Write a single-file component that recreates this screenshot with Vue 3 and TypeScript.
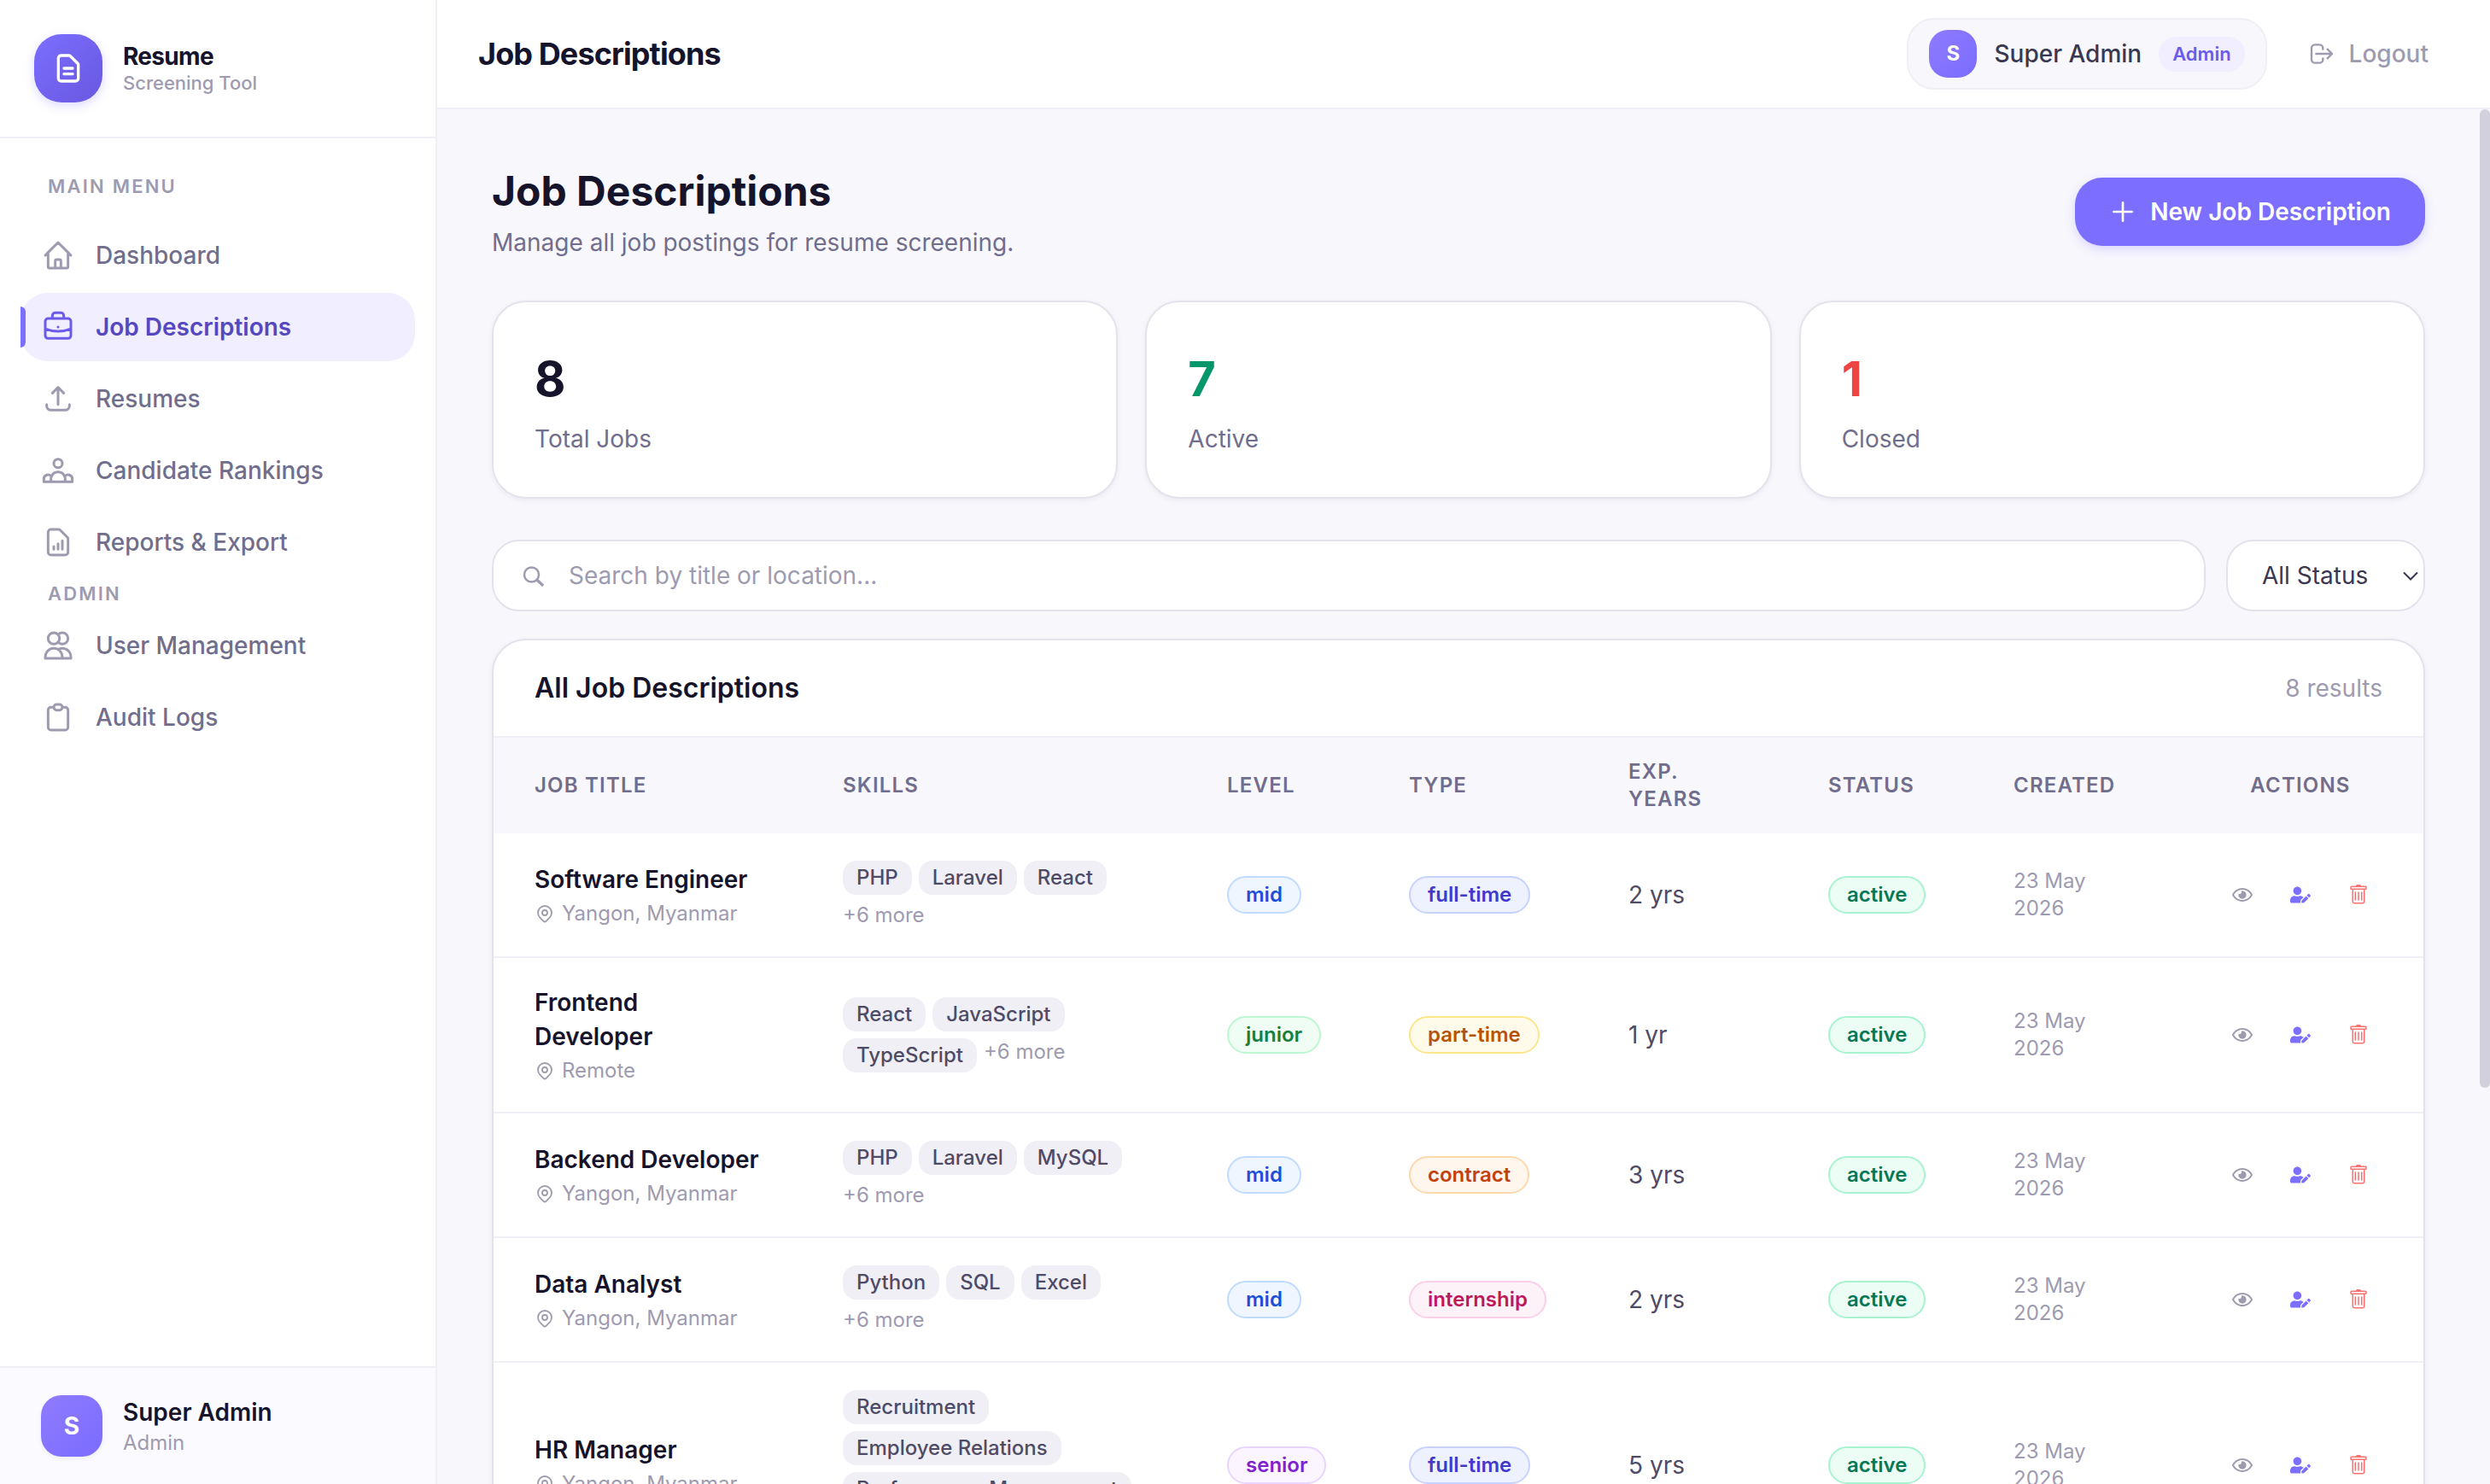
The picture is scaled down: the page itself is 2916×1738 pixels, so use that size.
<script setup lang="ts">
interface NavItem {
  label: string
  path: string
  active?: boolean
}

interface Job {
  title: string
  location: string
  skills: string[]
  more: string
  level: string
  type: string
  exp: string
  status: string
  created: string
}

const mainMenu: NavItem[] = [
  {
    label: 'Dashboard',
    path: 'M3 12l2-2m0 0l7-7 7 7M5 10v10a1 1 0 001 1h3m10-11l2 2m-2-2v10a1 1 0 01-1 1h-3m-6 0a1 1 0 001-1v-4a1 1 0 011-1h2a1 1 0 011 1v4a1 1 0 001 1m-6 0h6',
  },
  {
    label: 'Job Descriptions',
    active: true,
    path: 'M21 13.255A23.931 23.931 0 0112 15c-3.183 0-6.22-.62-9-1.745M16 6V4a2 2 0 00-2-2h-4a2 2 0 00-2 2v2m4 6h.01M5 20h14a2 2 0 002-2V8a2 2 0 00-2-2H5a2 2 0 00-2 2v10a2 2 0 002 2z',
  },
  {
    label: 'Resumes',
    path: 'M4 16v1a3 3 0 003 3h10a3 3 0 003-3v-1m-4-8l-4-4m0 0L8 8m4-4v12',
  },
  {
    label: 'Candidate Rankings',
    path: 'M17 20h5v-2a3 3 0 00-5.356-1.857M17 20H7m10 0v-2c0-.656-.126-1.283-.356-1.857M7 20H2v-2a3 3 0 015.356-1.857M7 20v-2c0-.656.126-1.283.356-1.857m0 0a5.002 5.002 0 019.288 0M15 7a3 3 0 11-6 0 3 3 0 016 0z',
  },
  {
    label: 'Reports & Export',
    path: 'M9 17v-2m3 2v-4m3 4v-6m2 10H7a2 2 0 01-2-2V5a2 2 0 012-2h5.586a1 1 0 01.707.293l5.414 5.414a1 1 0 01.293.707V19a2 2 0 01-2 2z',
  },
]

const adminMenu: NavItem[] = [
  {
    label: 'User Management',
    path: 'M12 4.354a4 4 0 110 5.292M15 21H3v-1a6 6 0 0112 0v1zm0 0h6v-1a6 6 0 00-9-5.197M13 7a4 4 0 11-8 0 4 4 0 018 0z',
  },
  {
    label: 'Audit Logs',
    path: 'M9 5H7a2 2 0 00-2 2v12a2 2 0 002 2h10a2 2 0 002-2V7a2 2 0 00-2-2h-2M9 5a2 2 0 002 2h2a2 2 0 002-2M9 5a2 2 0 012-2h2a2 2 0 012 2',
  },
]

const stats = [
  { value: 8, label: 'Total Jobs', tone: 'dark' },
  { value: 7, label: 'Active', tone: 'green' },
  { value: 1, label: 'Closed', tone: 'red' },
]

const jobs: Job[] = [
  { title: 'Software Engineer', location: 'Yangon, Myanmar', skills: ['PHP', 'Laravel', 'React'], more: '+6 more', level: 'mid', type: 'full-time', exp: '2 yrs', status: 'active', created: '23 May 2026' },
  { title: 'Frontend Developer', location: 'Remote', skills: ['React', 'JavaScript', 'TypeScript'], more: '+6 more', level: 'junior', type: 'part-time', exp: '1 yr', status: 'active', created: '23 May 2026' },
  { title: 'Backend Developer', location: 'Yangon, Myanmar', skills: ['PHP', 'Laravel', 'MySQL'], more: '+6 more', level: 'mid', type: 'contract', exp: '3 yrs', status: 'active', created: '23 May 2026' },
  { title: 'Data Analyst', location: 'Yangon, Myanmar', skills: ['Python', 'SQL', 'Excel'], more: '+6 more', level: 'mid', type: 'internship', exp: '2 yrs', status: 'active', created: '23 May 2026' },
  { title: 'HR Manager', location: 'Yangon, Myanmar', skills: ['Recruitment', 'Employee Relations', 'Performance Management'], more: '+6 more', level: 'senior', type: 'full-time', exp: '5 yrs', status: 'active', created: '23 May 2026' },
]
</script>

<template>
  <div class="app">
    <aside class="sidebar">
      <div class="brand">
        <div class="brand-icon">
          <svg class="line bold" viewBox="0 0 24 24" width="40" height="40">
            <path d="M9 12h6m-6 4h6m2 5H7a2 2 0 01-2-2V5a2 2 0 012-2h5.586a1 1 0 01.707.293l5.414 5.414a1 1 0 01.293.707V19a2 2 0 01-2 2z" />
          </svg>
        </div>
        <div>
          <div class="brand-name">Resume</div>
          <div class="brand-sub">Screening Tool</div>
        </div>
      </div>

      <nav class="nav">
        <div class="nav-label first">MAIN MENU</div>
        <a v-for="item in mainMenu" :key="item.label" class="nav-item" :class="{ active: item.active }">
          <svg class="line" viewBox="0 0 24 24" width="40" height="40"><path :d="item.path" /></svg>
          <span>{{ item.label }}</span>
        </a>
        <div class="nav-label">ADMIN</div>
        <a v-for="item in adminMenu" :key="item.label" class="nav-item">
          <svg class="line" viewBox="0 0 24 24" width="40" height="40"><path :d="item.path" /></svg>
          <span>{{ item.label }}</span>
        </a>
      </nav>

      <div class="account">
        <div class="avatar large">S</div>
        <div>
          <div class="account-name">Super Admin</div>
          <div class="account-role">Admin</div>
        </div>
      </div>
    </aside>

    <div class="main">
      <header class="topbar">
        <div class="topbar-title">Job Descriptions</div>
        <div class="topbar-right">
          <div class="user-pill">
            <div class="avatar">S</div>
            <span class="user-name">Super Admin</span>
            <span class="role">Admin</span>
          </div>
          <button class="logout">
            <svg class="line" viewBox="0 0 24 24" width="32" height="32">
              <path d="M17 16l4-4m0 0l-4-4m4 4H7m6 4v1a3 3 0 01-3 3H6a3 3 0 01-3-3V7a3 3 0 013-3h4a3 3 0 013 3v1" />
            </svg>
            Logout
          </button>
        </div>
      </header>

      <div class="scroller">
        <main class="content">
          <div class="page-head">
            <div>
              <h1>Job Descriptions</h1>
              <p>Manage all job postings for resume screening.</p>
            </div>
            <button class="primary">
              <svg class="line bold" viewBox="0 0 24 24" width="32" height="32"><path d="M12 4v16m8-8H4" /></svg>
              New Job Description
            </button>
          </div>

          <div class="stats">
            <div v-for="s in stats" :key="s.label" class="stat">
              <div class="stat-value" :class="s.tone">{{ s.value }}</div>
              <div class="stat-label">{{ s.label }}</div>
            </div>
          </div>

          <div class="filters">
            <div class="search">
              <svg class="search-icon" viewBox="0 0 32 32" width="32" height="32">
                <circle cx="12.500" cy="15" r="8.500" />
                <path d="M18.800 21.200L26.200 28" />
              </svg>
              <span>Search by title or location...</span>
            </div>
            <div class="select">
              <span>All Status</span>
              <svg viewBox="0 0 18 11" width="18" height="11"><path d="M1 1.500L9 9.500l8-8" /></svg>
            </div>
          </div>

          <section class="card">
            <div class="card-head">
              <h2>All Job Descriptions</h2>
              <span>8 results</span>
            </div>
            <table>
              <colgroup>
                <col class="c-title" /><col class="c-skills" /><col class="c-level" /><col class="c-type" />
                <col class="c-exp" /><col class="c-status" /><col class="c-created" /><col class="c-actions" />
              </colgroup>
              <thead>
                <tr>
                  <th>Job Title</th>
                  <th>Skills</th>
                  <th>Level</th>
                  <th>Type</th>
                  <th>Exp. Years</th>
                  <th>Status</th>
                  <th>Created</th>
                  <th class="center">Actions</th>
                </tr>
              </thead>
              <tbody>
                <tr v-for="job in jobs" :key="job.title">
                  <td>
                    <div class="job-title">{{ job.title }}</div>
                    <div class="job-loc">
                      <svg class="line" viewBox="0 0 24 24" width="24" height="24">
                        <path d="M17.657 16.657L13.414 20.9a1.998 1.998 0 01-2.827 0l-4.244-4.243a8 8 0 1111.314 0z" />
                        <path d="M15 11a3 3 0 11-6 0 3 3 0 016 0z" />
                      </svg>
                      <span>{{ job.location }}</span>
                    </div>
                  </td>
                  <td>
                    <div class="skills">
                      <span v-for="k in job.skills" :key="k" class="skill">{{ k }}</span>
                      <span class="more">{{ job.more }}</span>
                    </div>
                  </td>
                  <td><span class="badge" :class="job.level">{{ job.level }}</span></td>
                  <td><span class="badge" :class="job.type">{{ job.type }}</span></td>
                  <td class="exp">{{ job.exp }}</td>
                  <td><span class="badge active">{{ job.status }}</span></td>
                  <td class="created">{{ job.created }}</td>
                  <td class="actions-cell">
                    <div class="actions">
                      <button class="view" aria-label="View">
                        <svg viewBox="0 0 576 512" width="24" height="24">
                          <path d="M288 144a110.940 110.940 0 0 0-31.240 5 55.400 55.400 0 0 1 7.240 27 56 56 0 0 1-56 56 55.400 55.400 0 0 1-27-7.240A111.710 111.710 0 1 0 288 144zm284.520 97.400C518.290 135.590 410.930 64 288 64S57.680 135.640 3.480 241.410a32.350 32.350 0 0 0 0 29.190C57.710 376.410 165.070 448 288 448s230.320-71.640 284.520-177.410a32.350 32.350 0 0 0 0-29.190zM288 400c-98.650 0-189.090-55-237.930-144C98.910 167 189.340 112 288 112s189.090 55 237.930 144C477.100 345 386.660 400 288 400z" />
                        </svg>
                      </button>
                      <button class="edit" aria-label="Edit">
                        <svg viewBox="0 0 640 512" width="24" height="24">
                          <path d="M224 256c70.700 0 128-57.300 128-128S294.700 0 224 0 96 57.300 96 128s57.300 128 128 128zm89.600 32h-16.700c-22.200 10.200-46.900 16-72.900 16s-50.600-5.800-72.900-16h-16.700C60.200 288 0 348.200 0 422.400V464c0 26.500 21.500 48 48 48h274.900c-2.400-6.800-3.400-14-2.600-21.300l6.800-60.900 1.200-11.100 7.900-7.900 77.300-77.300c-24.500-27.700-60-45.500-99.900-45.500zm45.300 145.300l-6.800 61c-1.100 10.200 7.500 18.800 17.600 17.600l60.900-6.800 137.900-137.900-71.700-71.700-137.900 137.800zM633 268.900L595.100 231c-9.300-9.300-24.500-9.300-33.800 0l-37.800 37.800-4.100 4.100 71.800 71.700 41.800-41.800c9.300-9.400 9.300-24.500 0-33.900z" />
                        </svg>
                      </button>
                      <button class="remove" aria-label="Delete">
                        <svg viewBox="0 0 16 16" width="24" height="24">
                          <path d="M5.500 5.500A.5.500 0 0 1 6 6v6a.5.500 0 0 1-1 0V6a.5.500 0 0 1 .5-.5m2.500 0a.5.500 0 0 1 .5.500v6a.5.500 0 0 1-1 0V6a.5.500 0 0 1 .5-.5m3 .5a.5.500 0 0 0-1 0v6a.5.500 0 0 0 1 0z" />
                          <path d="M14.500 3a1 1 0 0 1-1 1H13v9a2 2 0 0 1-2 2H5a2 2 0 0 1-2-2V4h-.5a1 1 0 0 1-1-1V2a1 1 0 0 1 1-1H6a1 1 0 0 1 1-1h2a1 1 0 0 1 1 1h3.500a1 1 0 0 1 1 1zM4.118 4 4 4.059V13a1 1 0 0 0 1 1h6a1 1 0 0 0 1-1V4.059L11.882 4zM2.500 3h11V2h-11z" />
                        </svg>
                      </button>
                    </div>
                  </td>
                </tr>
              </tbody>
            </table>
          </section>
        </main>
        <div class="track"><div class="thumb"></div></div>
      </div>
    </div>
  </div>
</template>

<style>
body {
  margin: 0;
  overflow: hidden;
}
</style>

<style scoped>
* {
  box-sizing: border-box;
}

.app {
  display: flex;
  width: 2916px;
  height: 1738px;
  overflow: hidden;
  font-family: Inter, 'Liberation Sans', sans-serif;
  font-size: 28px;
  line-height: 40px;
  color: #16142b;
  background: #f8f7fc;
}

button {
  font: inherit;
  border: 0;
  background: none;
  margin: 0;
}

svg {
  display: block;
  flex: none;
}

.line {
  fill: none;
  stroke: currentColor;
  stroke-width: 1.8;
  stroke-linecap: round;
  stroke-linejoin: round;
}

.line.bold {
  stroke-width: 2;
}

/* Sidebar */
.sidebar {
  width: 512px;
  flex: none;
  display: flex;
  flex-direction: column;
  background: #fff;
  border-right: 2px solid #f0eff5;
}

.brand {
  height: 162px;
  flex: none;
  display: flex;
  align-items: center;
  gap: 24px;
  padding: 0 40px;
  border-bottom: 2px solid #f0eff5;
}

.brand-icon {
  width: 80px;
  height: 80px;
  display: flex;
  align-items: center;
  justify-content: center;
  color: #fff;
  border-radius: 32px;
  background: linear-gradient(135deg, #7c6fff, #6858e0);
  box-shadow: 0 4px 12px rgba(124, 111, 255, 0.25);
}

.brand-name {
  font-weight: 700;
  line-height: 35px;
  letter-spacing: -0.025em;
}

.brand-sub {
  font-size: 22px;
  line-height: 27.5px;
  font-weight: 500;
  color: #9e9bb0;
}

.nav {
  flex: 1;
  display: flex;
  flex-direction: column;
  gap: 4px;
  padding: 32px 24px;
}

.nav-label {
  padding: 0 32px;
  font-size: 22px;
  line-height: 33px;
  font-weight: 600;
  letter-spacing: 0.1em;
  color: #9e9bb0;
}

.nav-label.first {
  padding-top: 8px;
  padding-bottom: 8px;
  margin-bottom: 12px;
}

.nav-item {
  position: relative;
  height: 80px;
  flex: none;
  display: flex;
  align-items: center;
  gap: 24px;
  padding: 0 24px;
  border-radius: 32px;
  font-weight: 500;
  color: #706e8c;
}

.nav-item svg {
  color: #9e9bb0;
}

.nav-item.active {
  background: #f0eeff;
  color: #5548c0;
  font-weight: 600;
}

.nav-item.active svg {
  color: #6a5ce8;
}

.nav-item.active::before {
  content: '';
  position: absolute;
  left: 0;
  top: 16px;
  width: 6px;
  height: 48px;
  border-radius: 0 6px 6px 0;
  background: #7c6fff;
}

.account {
  height: 138px;
  flex: none;
  display: flex;
  align-items: center;
  gap: 24px;
  padding: 0 48px;
  border-top: 2px solid #f0eff5;
  background: #fbfafe;
}

.avatar {
  width: 56px;
  height: 56px;
  flex: none;
  display: flex;
  align-items: center;
  justify-content: center;
  border-radius: 22px;
  font-size: 24px;
  font-weight: 700;
  color: #fff;
  background: linear-gradient(135deg, #8f7bff, #7a6cff);
}

.avatar.large {
  width: 72px;
  height: 72px;
  border-radius: 24px;
  font-size: 28px;
  box-shadow: 0 2px 6px rgba(22, 20, 43, 0.06);
}

.account-name {
  font-weight: 600;
}

.account-role {
  font-size: 24px;
  line-height: 32px;
  color: #9e9bb0;
}

/* Top bar */
.main {
  flex: 1;
  min-width: 0;
  display: flex;
  flex-direction: column;
}

.topbar {
  height: 128px;
  flex: none;
  display: flex;
  align-items: center;
  justify-content: space-between;
  padding: 0 48px;
  background: #fff;
  border-bottom: 2px solid #f0eff5;
}

.topbar-title {
  font-size: 36px;
  font-weight: 700;
  letter-spacing: -0.025em;
}

.topbar-right {
  display: flex;
  align-items: center;
  gap: 24px;
}

.user-pill {
  display: flex;
  align-items: center;
  gap: 20px;
  padding: 12px 24px;
  border: 2px solid #f0eff5;
  border-radius: 32px;
  background: #f8f7fc;
}

.user-name {
  font-weight: 500;
  color: #3a3850;
}

.role {
  padding: 4px 16px;
  border-radius: 20px;
  font-size: 22px;
  line-height: 33px;
  font-weight: 600;
  color: #6a5ce8;
  background: #f0eeff;
}

.logout {
  display: flex;
  align-items: center;
  gap: 16px;
  padding: 16px 24px;
  font-weight: 500;
  color: #9e9bb0;
}

/* Content */
.scroller {
  flex: 1;
  min-height: 0;
  display: flex;
}

.content {
  flex: 1;
  min-width: 0;
  padding: 64px;
  overflow: hidden;
}

.track {
  width: 12px;
  flex: none;
}

.thumb {
  height: 1146px;
  border-radius: 6px;
  background: #d1d0dc;
}

.page-head {
  display: flex;
  align-items: center;
  justify-content: space-between;
}

h1 {
  margin: 0;
  font-size: 48px;
  line-height: 64px;
  font-weight: 700;
}

.page-head p {
  margin: 8px 0 0;
  color: #706e8c;
}

.primary {
  height: 80px;
  display: flex;
  align-items: center;
  gap: 16px;
  padding: 0 40px;
  border-radius: 32px;
  font-weight: 600;
  color: #fff;
  background: #7c6fff;
  box-shadow: 0 4px 12px rgba(124, 111, 255, 0.25);
}

.stats {
  display: grid;
  grid-template-columns: repeat(3, 1fr);
  gap: 32px;
  margin-top: 48px;
}

.stat {
  padding: 48px;
  border: 2px solid #e4e3ec;
  border-radius: 40px;
  background: #fff;
  box-shadow: 0 2px 6px rgba(22, 20, 43, 0.06);
}

.stat-value {
  font-size: 56px;
  line-height: 84px;
  font-weight: 700;
}

.stat-value.green {
  color: #059669;
}

.stat-value.red {
  color: #ef4444;
}

.stat-label {
  margin-top: 8px;
  color: #706e8c;
}

.filters {
  display: flex;
  gap: 24px;
  margin-top: 48px;
}

.search,
.select {
  height: 84px;
  display: flex;
  align-items: center;
  border: 2px solid #e4e3ec;
  border-radius: 32px;
  background: #fff;
}

.search {
  flex: 1;
  gap: 24px;
  padding: 0 32px;
  color: #9e9bb0;
}

.search-icon {
  fill: none;
  stroke: currentColor;
  stroke-width: 2.5;
}

.search-icon path {
  stroke-width: 3.2;
}

.select {
  width: 233px;
  justify-content: space-between;
  padding: 0 6px 0 40px;
  color: #3a3850;
}

.select svg {
  fill: none;
  stroke: #3a3850;
  stroke-width: 2;
}

/* Table card */
.card {
  margin-top: 32px;
  border: 2px solid #e4e3ec;
  border-radius: 40px;
  overflow: hidden;
  background: #fff;
  box-shadow: 0 2px 6px rgba(22, 20, 43, 0.06);
}

.card-head {
  display: flex;
  align-items: center;
  justify-content: space-between;
  padding: 32px 48px;
  border-bottom: 2px solid #f0eff5;
  color: #9e9bb0;
}

h2 {
  margin: 0;
  font-size: 32px;
  line-height: 48px;
  font-weight: 600;
  color: #16142b;
}

table {
  width: 100%;
  table-layout: fixed;
  border-collapse: separate;
  border-spacing: 0;
}

.c-title { width: 361px; }
.c-skills { width: 450px; }
.c-level { width: 213px; }
.c-type { width: 257px; }
.c-exp { width: 234px; }
.c-status { width: 217px; }
.c-created { width: 240px; }
.c-actions { width: 288px; }

th {
  padding: 24px 48px;
  font-size: 24px;
  line-height: 32px;
  font-weight: 600;
  letter-spacing: 0.05em;
  text-transform: uppercase;
  text-align: left;
  color: #706e8c;
  background: #f8f7fc;
}

th.center {
  text-align: center;
}

td {
  padding: 32px 48px;
  vertical-align: middle;
  border-bottom: 2px solid #f0eff5;
}

.job-title {
  font-weight: 600;
}

.job-loc {
  display: flex;
  align-items: center;
  gap: 8px;
  margin-top: 4px;
  font-size: 24px;
  line-height: 32px;
  color: #9e9bb0;
}

.skills {
  display: flex;
  flex-wrap: wrap;
  gap: 8px;
  font-size: 24px;
  line-height: 32px;
}

.skill {
  padding: 4px 16px;
  border-radius: 16px;
  font-weight: 500;
  white-space: nowrap;
  color: #4e4b66;
  background: #f0eff5;
}

.more {
  color: #9e9bb0;
}

.badge {
  display: block;
  width: fit-content;
  padding: 4px 20px;
  border: 2px solid;
  border-radius: 22px;
  font-size: 24px;
  line-height: 32px;
  font-weight: 600;
  white-space: nowrap;
}

.mid { color: #1d4ed8; background: #eff6ff; border-color: #bfdbfe; }
.junior { color: #15803d; background: #f0fdf4; border-color: #bbf7d0; }
.senior { color: #7e22ce; background: #faf5ff; border-color: #e9d5ff; }
.full-time { color: #4338ca; background: #eef2ff; border-color: #c7d2fe; }
.part-time { color: #b45309; background: #fffbeb; border-color: #fde68a; }
.contract { color: #c2410c; background: #fff7ed; border-color: #fed7aa; }
.internship { color: #be185d; background: #fdf2f8; border-color: #fbcfe8; }
.badge.active { color: #047857; background: #ecfdf5; border-color: #a7f3d0; }

.exp {
  color: #4e4b66;
}

.created {
  font-size: 24px;
  line-height: 32px;
  color: #9e9bb0;
}

.actions-cell {
  padding-left: 40px;
  padding-right: 40px;
}

.actions {
  display: flex;
  justify-content: center;
  gap: 8px;
}

.actions button {
  padding: 12px 18px;
}

.view { color: #9e9bb0; }
.edit { color: #7c6fff; }
.remove { color: #f87171; }

.actions svg {
  fill: currentColor;
}
</style>
